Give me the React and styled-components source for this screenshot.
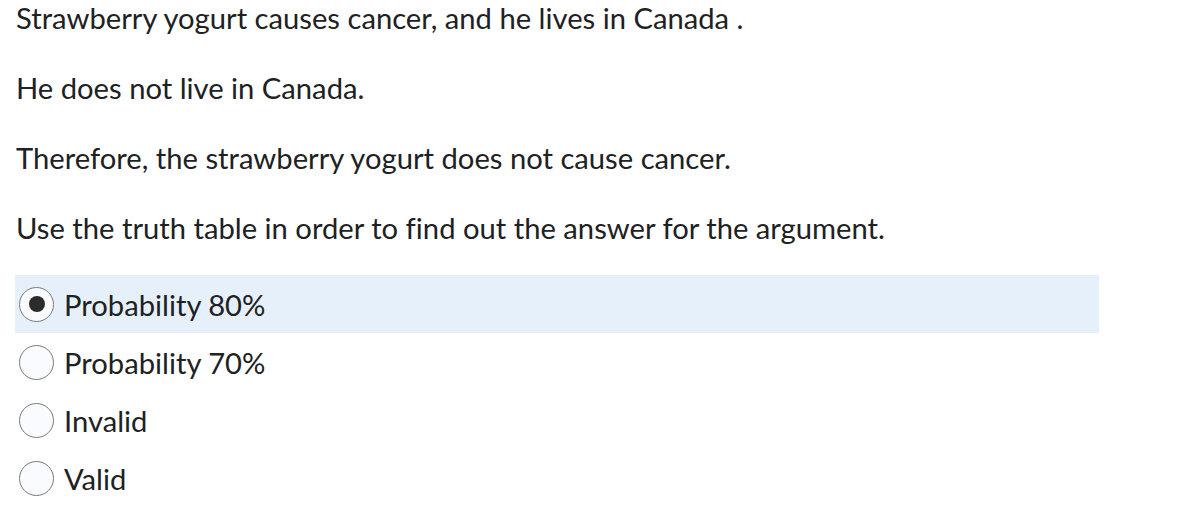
import React from "react"
import styled, { createGlobalStyle } from "styled-components"

const Global = createGlobalStyle`
  body {
    margin: 0;
    background: #fff;
    font-family: Lato, "Open Sans", sans-serif;
    color: #202122;
    font-variant-ligatures: none;
  }
`

const Page = styled.div`
  display: flex;
  flex-direction: column;
  padding: 0 16px;
  width: 1100px;
`

const Question = styled.div`
  display: flex;
  flex-direction: column;
  gap: 35px;
`

const Para = styled.p`
  margin: 0;
  font-size: 29.2px;
  line-height: 35px;
`

const Options = styled.div`
  margin-top: 30px;
  margin-left: -1px;
  display: flex;
  flex-direction: column;
`

const Option = styled.label`
  display: flex;
  align-items: center;
  gap: 10px;
  height: 58px;
  width: 1084px;
  padding-left: 4px;
  box-sizing: border-box;
  font-size: 29.2px;
  background: ${p => (p.selected ? "#e6f0fa" : "transparent")};
`

const Radio = styled.span`
  width: 35px;
  height: 35px;
  box-sizing: border-box;
  border-radius: 50%;
  border: 1px solid #7a7a7a;
  background: #f9fbff;
  display: flex;
  align-items: center;
  justify-content: center;
  flex-shrink: 0;

  &::after {
    content: "";
    display: ${p => (p.checked ? "block" : "none")};
    width: 16px;
    height: 16px;
    border-radius: 50%;
    background: #2b2b2b;
  }
`

const answers = ["Probability 80%", "Probability 70%", "Invalid", "Valid"]

export default function App() {
  return (
    <>
      <Global />
      <Page>
        <Question>
          <Para>Strawberry yogurt causes cancer, and he lives in Canada .</Para>
          <Para>He does not live in Canada.</Para>
          <Para>Therefore, the strawberry yogurt does not cause cancer.</Para>
          <Para>Use the truth table in order to find out the answer for the argument.</Para>
        </Question>
        <Options>
          {answers.map((a, i) => (
            <Option key={a} selected={i === 0}>
              <Radio checked={i === 0} />
              {a}
            </Option>
          ))}
        </Options>
      </Page>
    </>
  )
}
